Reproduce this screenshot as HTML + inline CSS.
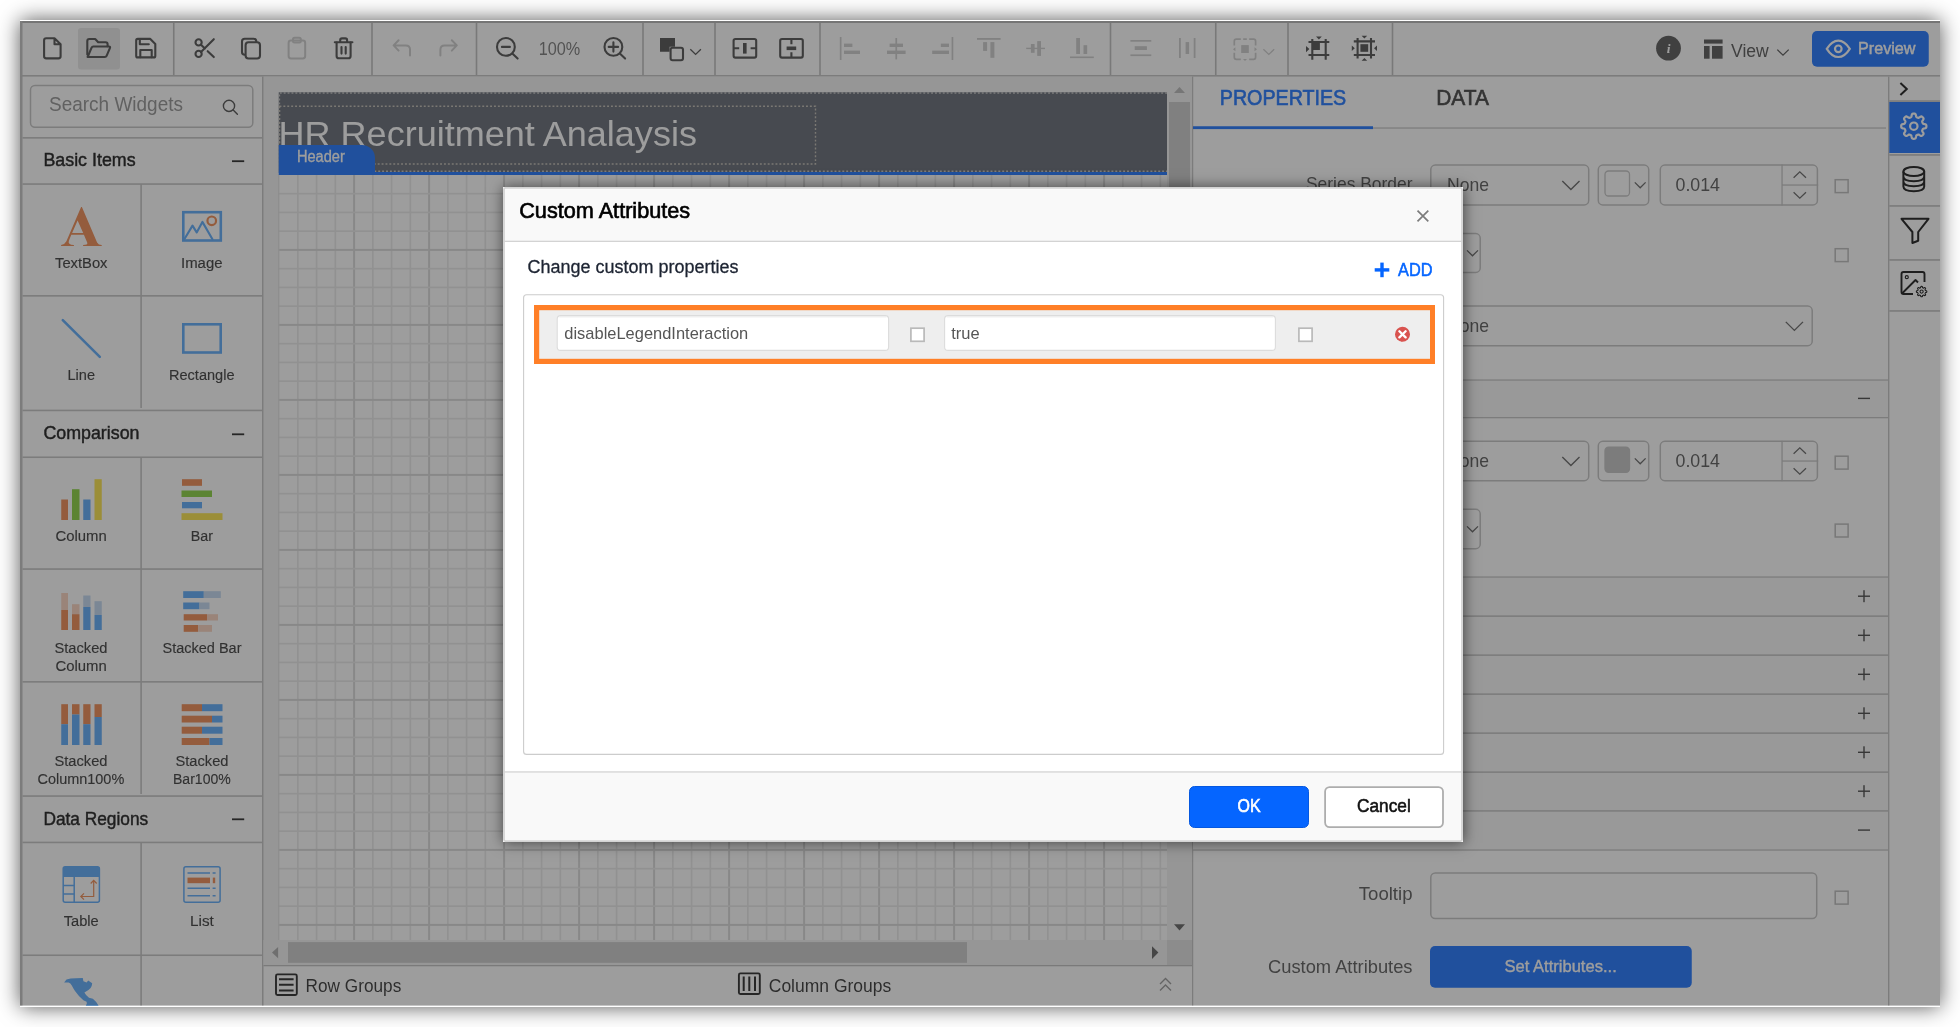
<!DOCTYPE html>
<html><head><meta charset="utf-8"><title>Custom Attributes</title>
<style>
html,body{margin:0;padding:0;background:#fff;}
body{width:1960px;height:1027px;position:relative;overflow:hidden;font-family:"Liberation Sans",sans-serif;}
#win{position:absolute;left:20px;top:20px;width:1920px;height:987px;background:#fff;box-shadow:0 0 20px rgba(0,0,0,.66);}
svg{position:absolute;left:0;top:0;will-change:transform;}
#dlgshadow{position:absolute;left:503.5px;top:187.5px;width:959px;height:654px;background:#fff;box-shadow:0 0 13px 1px rgba(0,0,0,.55);}
text{white-space:pre;}
</style></head><body>
<div id="win"></div>
<svg id="app" width="1960" height="1027" viewBox="0 0 1960 1027">
<rect x="20.00" y="21.00" width="1920.00" height="984.60" fill="#ffffff" />
<rect x="20.00" y="21.00" width="1920.00" height="2.00" fill="#aeaeae" />
<rect x="20.00" y="21.00" width="2.50" height="984.60" fill="#bcbcbc" />
<rect x="20.00" y="75.00" width="1920.00" height="1.6" fill="#bcbcbc"/>
<rect x="172.95" y="23.00" width="1.6" height="52.00" fill="#b6b6b6"/>
<rect x="371.20" y="23.00" width="1.6" height="52.00" fill="#b6b6b6"/>
<rect x="475.70" y="23.00" width="1.6" height="52.00" fill="#b6b6b6"/>
<rect x="642.20" y="23.00" width="1.6" height="52.00" fill="#b6b6b6"/>
<rect x="714.20" y="23.00" width="1.6" height="52.00" fill="#b6b6b6"/>
<rect x="819.20" y="23.00" width="1.6" height="52.00" fill="#b6b6b6"/>
<rect x="1109.70" y="23.00" width="1.6" height="52.00" fill="#b6b6b6"/>
<rect x="1214.95" y="23.00" width="1.6" height="52.00" fill="#b6b6b6"/>
<rect x="1287.20" y="23.00" width="1.6" height="52.00" fill="#b6b6b6"/>
<rect x="1391.70" y="23.00" width="1.6" height="52.00" fill="#b6b6b6"/>
<rect x="263.50" y="76.60" width="903.50" height="863.40" fill="#f0f0f0" />
<rect x="262.00" y="76.60" width="1.5" height="929.00" fill="#bcbcbc"/>
<rect x="278.75" y="174.50" width="888.25" height="765.50" fill="#ffffff" />
<rect x="297.00" y="174.5" width="1.7" height="765.5" fill="#e7e7e7"/>
<rect x="315.75" y="174.5" width="1.7" height="765.5" fill="#e7e7e7"/>
<rect x="334.50" y="174.5" width="1.7" height="765.5" fill="#e7e7e7"/>
<rect x="353.10" y="174.5" width="2.0" height="765.5" fill="#d5d5d5"/>
<rect x="372.00" y="174.5" width="1.7" height="765.5" fill="#e7e7e7"/>
<rect x="390.75" y="174.5" width="1.7" height="765.5" fill="#e7e7e7"/>
<rect x="409.50" y="174.5" width="1.7" height="765.5" fill="#e7e7e7"/>
<rect x="428.10" y="174.5" width="2.0" height="765.5" fill="#d5d5d5"/>
<rect x="447.00" y="174.5" width="1.7" height="765.5" fill="#e7e7e7"/>
<rect x="465.75" y="174.5" width="1.7" height="765.5" fill="#e7e7e7"/>
<rect x="484.50" y="174.5" width="1.7" height="765.5" fill="#e7e7e7"/>
<rect x="503.10" y="174.5" width="2.0" height="765.5" fill="#d5d5d5"/>
<rect x="522.00" y="174.5" width="1.7" height="765.5" fill="#e7e7e7"/>
<rect x="540.75" y="174.5" width="1.7" height="765.5" fill="#e7e7e7"/>
<rect x="559.50" y="174.5" width="1.7" height="765.5" fill="#e7e7e7"/>
<rect x="578.10" y="174.5" width="2.0" height="765.5" fill="#d5d5d5"/>
<rect x="597.00" y="174.5" width="1.7" height="765.5" fill="#e7e7e7"/>
<rect x="615.75" y="174.5" width="1.7" height="765.5" fill="#e7e7e7"/>
<rect x="634.50" y="174.5" width="1.7" height="765.5" fill="#e7e7e7"/>
<rect x="653.10" y="174.5" width="2.0" height="765.5" fill="#d5d5d5"/>
<rect x="672.00" y="174.5" width="1.7" height="765.5" fill="#e7e7e7"/>
<rect x="690.75" y="174.5" width="1.7" height="765.5" fill="#e7e7e7"/>
<rect x="709.50" y="174.5" width="1.7" height="765.5" fill="#e7e7e7"/>
<rect x="728.10" y="174.5" width="2.0" height="765.5" fill="#d5d5d5"/>
<rect x="747.00" y="174.5" width="1.7" height="765.5" fill="#e7e7e7"/>
<rect x="765.75" y="174.5" width="1.7" height="765.5" fill="#e7e7e7"/>
<rect x="784.50" y="174.5" width="1.7" height="765.5" fill="#e7e7e7"/>
<rect x="803.10" y="174.5" width="2.0" height="765.5" fill="#d5d5d5"/>
<rect x="822.00" y="174.5" width="1.7" height="765.5" fill="#e7e7e7"/>
<rect x="840.75" y="174.5" width="1.7" height="765.5" fill="#e7e7e7"/>
<rect x="859.50" y="174.5" width="1.7" height="765.5" fill="#e7e7e7"/>
<rect x="878.10" y="174.5" width="2.0" height="765.5" fill="#d5d5d5"/>
<rect x="897.00" y="174.5" width="1.7" height="765.5" fill="#e7e7e7"/>
<rect x="915.75" y="174.5" width="1.7" height="765.5" fill="#e7e7e7"/>
<rect x="934.50" y="174.5" width="1.7" height="765.5" fill="#e7e7e7"/>
<rect x="953.10" y="174.5" width="2.0" height="765.5" fill="#d5d5d5"/>
<rect x="972.00" y="174.5" width="1.7" height="765.5" fill="#e7e7e7"/>
<rect x="990.75" y="174.5" width="1.7" height="765.5" fill="#e7e7e7"/>
<rect x="1009.50" y="174.5" width="1.7" height="765.5" fill="#e7e7e7"/>
<rect x="1028.10" y="174.5" width="2.0" height="765.5" fill="#d5d5d5"/>
<rect x="1047.00" y="174.5" width="1.7" height="765.5" fill="#e7e7e7"/>
<rect x="1065.75" y="174.5" width="1.7" height="765.5" fill="#e7e7e7"/>
<rect x="1084.50" y="174.5" width="1.7" height="765.5" fill="#e7e7e7"/>
<rect x="1103.10" y="174.5" width="2.0" height="765.5" fill="#d5d5d5"/>
<rect x="1122.00" y="174.5" width="1.7" height="765.5" fill="#e7e7e7"/>
<rect x="1140.75" y="174.5" width="1.7" height="765.5" fill="#e7e7e7"/>
<rect x="1159.50" y="174.5" width="1.7" height="765.5" fill="#e7e7e7"/>
<rect x="278.75" y="192.80" width="888.25" height="1.7" fill="#e7e7e7"/>
<rect x="278.75" y="211.55" width="888.25" height="1.7" fill="#e7e7e7"/>
<rect x="278.75" y="230.30" width="888.25" height="1.7" fill="#e7e7e7"/>
<rect x="278.75" y="248.90" width="888.25" height="2.0" fill="#d5d5d5"/>
<rect x="278.75" y="267.80" width="888.25" height="1.7" fill="#e7e7e7"/>
<rect x="278.75" y="286.55" width="888.25" height="1.7" fill="#e7e7e7"/>
<rect x="278.75" y="305.30" width="888.25" height="1.7" fill="#e7e7e7"/>
<rect x="278.75" y="323.90" width="888.25" height="2.0" fill="#d5d5d5"/>
<rect x="278.75" y="342.80" width="888.25" height="1.7" fill="#e7e7e7"/>
<rect x="278.75" y="361.55" width="888.25" height="1.7" fill="#e7e7e7"/>
<rect x="278.75" y="380.30" width="888.25" height="1.7" fill="#e7e7e7"/>
<rect x="278.75" y="398.90" width="888.25" height="2.0" fill="#d5d5d5"/>
<rect x="278.75" y="417.80" width="888.25" height="1.7" fill="#e7e7e7"/>
<rect x="278.75" y="436.55" width="888.25" height="1.7" fill="#e7e7e7"/>
<rect x="278.75" y="455.30" width="888.25" height="1.7" fill="#e7e7e7"/>
<rect x="278.75" y="473.90" width="888.25" height="2.0" fill="#d5d5d5"/>
<rect x="278.75" y="492.80" width="888.25" height="1.7" fill="#e7e7e7"/>
<rect x="278.75" y="511.55" width="888.25" height="1.7" fill="#e7e7e7"/>
<rect x="278.75" y="530.30" width="888.25" height="1.7" fill="#e7e7e7"/>
<rect x="278.75" y="548.90" width="888.25" height="2.0" fill="#d5d5d5"/>
<rect x="278.75" y="567.80" width="888.25" height="1.7" fill="#e7e7e7"/>
<rect x="278.75" y="586.55" width="888.25" height="1.7" fill="#e7e7e7"/>
<rect x="278.75" y="605.30" width="888.25" height="1.7" fill="#e7e7e7"/>
<rect x="278.75" y="623.90" width="888.25" height="2.0" fill="#d5d5d5"/>
<rect x="278.75" y="642.80" width="888.25" height="1.7" fill="#e7e7e7"/>
<rect x="278.75" y="661.55" width="888.25" height="1.7" fill="#e7e7e7"/>
<rect x="278.75" y="680.30" width="888.25" height="1.7" fill="#e7e7e7"/>
<rect x="278.75" y="698.90" width="888.25" height="2.0" fill="#d5d5d5"/>
<rect x="278.75" y="717.80" width="888.25" height="1.7" fill="#e7e7e7"/>
<rect x="278.75" y="736.55" width="888.25" height="1.7" fill="#e7e7e7"/>
<rect x="278.75" y="755.30" width="888.25" height="1.7" fill="#e7e7e7"/>
<rect x="278.75" y="773.90" width="888.25" height="2.0" fill="#d5d5d5"/>
<rect x="278.75" y="792.80" width="888.25" height="1.7" fill="#e7e7e7"/>
<rect x="278.75" y="811.55" width="888.25" height="1.7" fill="#e7e7e7"/>
<rect x="278.75" y="830.30" width="888.25" height="1.7" fill="#e7e7e7"/>
<rect x="278.75" y="848.90" width="888.25" height="2.0" fill="#d5d5d5"/>
<rect x="278.75" y="867.80" width="888.25" height="1.7" fill="#e7e7e7"/>
<rect x="278.75" y="886.55" width="888.25" height="1.7" fill="#e7e7e7"/>
<rect x="278.75" y="905.30" width="888.25" height="1.7" fill="#e7e7e7"/>
<rect x="278.75" y="923.90" width="888.25" height="2.0" fill="#d5d5d5"/>
<rect x="278.15" y="174.50" width="1.2" height="765.50" fill="#dcdcdc"/>
<rect x="278.75" y="92.25" width="888.25" height="79.75" fill="#535965" />
<path d="M1167 92.95 H279.45 V171.3 H1167" fill="none" stroke="#bdbdbd" stroke-width="1.4" stroke-dasharray="1.9 2"/>
<rect x="278.75" y="172.00" width="888.25" height="3.00" fill="#0565ff" />
<rect x="279.5" y="106.3" width="536" height="57.7" fill="none" stroke="#b9b4aa" stroke-width="1.4" stroke-dasharray="1.9 2"/>
<text x="278.60" y="146.00" font-family="Liberation Sans" font-size="35.6" font-weight="normal" fill="#ffffff" textLength="418.30" lengthAdjust="spacingAndGlyphs">HR Recruitment Analaysis</text>
<path d="M278.75 145 H362 A13 13 0 0 1 375 158 V173 H278.75 Z" fill="#0565ff" />
<text x="296.90" y="162.00" font-family="Liberation Sans" font-size="15.6" font-weight="normal" fill="#ffffff" textLength="47.90" lengthAdjust="spacingAndGlyphs" stroke="#ffffff" stroke-width="0.3">Header</text>
<rect x="1167.00" y="76.60" width="25.00" height="863.40" fill="#f0f0f0" />
<rect x="1169.00" y="102.00" width="21.00" height="718.00" fill="#c4c4c4" />
<path d="M1174 93 L1179.5 87 L1185 93 Z" fill="#b0b0b0" />
<path d="M1174 924.2 L1185 924.2 L1179.5 930.4 Z" fill="#505050" />
<rect x="263.50" y="940.00" width="903.50" height="25.00" fill="#f0f0f0" />
<rect x="288.00" y="942.10" width="679.00" height="20.70" fill="#c4c4c4" />
<path d="M278.1 947 L272 952.6 L278.1 958.2 Z" fill="#a3a3a3" />
<path d="M1152 946.3 L1158.4 952.6 L1152 958.9 Z" fill="#505050" />
<rect x="1167.00" y="940.00" width="25.00" height="25.30" fill="#dcdcdc" />
<rect x="263.50" y="965.00" width="928.50" height="1.3" fill="#b8b8b8"/>
<g fill="none" stroke="#111" stroke-width="1.9"><rect x="276" y="974.4" width="20.8" height="20.6" rx="1.5"/><path d="M279 979.2h14.6M279 984.8h14.6M279 990.5h14.6" stroke-width="2"/></g>
<text x="305.60" y="992.40" font-family="Liberation Sans" font-size="18" font-weight="normal" fill="#1c1c1c" textLength="95.65" lengthAdjust="spacingAndGlyphs">Row Groups</text>
<g fill="none" stroke="#111" stroke-width="1.9"><rect x="738.9" y="973.4" width="20.9" height="20.6" rx="1.5"/><path d="M743.7 976.4v14.6M749.3 976.4v14.6M755 976.4v14.6" stroke-width="2"/></g>
<text x="768.75" y="992.20" font-family="Liberation Sans" font-size="18" font-weight="normal" fill="#1c1c1c" textLength="122.50" lengthAdjust="spacingAndGlyphs">Column Groups</text>
<path d="M1160 984 L1165.5 978.5 L1171 984 M1160 990.5 L1165.5 985 L1171 990.5" fill="none" stroke="#8c8c8c" stroke-width="1.4" />
<rect x="1192.00" y="76.60" width="1.25" height="929.00" fill="#bcbcbc"/>
<rect x="1193.00" y="127.40" width="693.00" height="1.25" fill="#bcbcbc"/>
<rect x="1193.00" y="126.25" width="180.00" height="2.85" fill="#0565ff" />
<text x="1219.75" y="105.40" font-family="Liberation Sans" font-size="22" font-weight="normal" fill="#0565ff" textLength="126.50" lengthAdjust="spacingAndGlyphs" stroke="#0565ff" stroke-width="0.65">PROPERTIES</text>
<text x="1436.25" y="105.40" font-family="Liberation Sans" font-size="22" font-weight="normal" fill="#2c2c2c" textLength="52.75" lengthAdjust="spacingAndGlyphs" stroke="#2c2c2c" stroke-width="0.65">DATA</text>
<rect x="1888.00" y="76.60" width="1.4" height="929.00" fill="#bcbcbc"/>
<rect x="1889.30" y="102.00" width="50.70" height="51.00" fill="#0565ff" />
<rect x="1889.30" y="100.30" width="50.70" height="1.5" fill="#b4b4b4"/>
<rect x="1889.30" y="154.20" width="50.70" height="1.5" fill="#b4b4b4"/>
<rect x="1889.30" y="205.20" width="50.70" height="1.5" fill="#b4b4b4"/>
<rect x="1889.30" y="259.20" width="50.70" height="1.5" fill="#b4b4b4"/>
<rect x="1889.30" y="310.20" width="50.70" height="1.5" fill="#b4b4b4"/>
<rect x="78.00" y="28.00" width="42.00" height="41.50" fill="#e4e4e4" rx="3" />
<g fill="none" stroke="#3d3d3d" stroke-width="2.1" stroke-linecap="round" stroke-linejoin="round" >
<path d="M46.2 38.2 H54.5 L60.6 44.3 V56.3 Q60.6 58.4 58.5 58.4 H46.2 Q44.1 58.4 44.1 56.3 V40.3 Q44.1 38.2 46.2 38.2 Z M54.5 38.4 V44.3 H60.4"/>
<path d="M87.3 54.5 V41 Q87.3 39 89.3 39 H95.2 L98.2 42.2 H105.6 Q107.6 42.2 107.6 44.2 V46.3"/>
<path d="M87.6 57 L91.6 47.6 Q92.1 46.5 93.3 46.5 H108.8 Q110.6 46.5 109.9 48.2 L106.6 55.9 Q106.1 57 104.9 57 Z"/>
<path d="M136.2 40.4 Q136.2 38.9 137.7 38.9 H150.3 L155.3 43.9 V55.9 Q155.3 57.4 153.8 57.4 H137.7 Q136.2 57.4 136.2 55.9 Z"/>
<path d="M139.8 39 V44.2 H148.8 M140.3 57.3 V50 H151.7 V57.3"/>
<circle cx="198.6" cy="42.4" r="3.1"/><circle cx="198.6" cy="53.9" r="3.1"/>
<path d="M201 44.7 L204.9 48.5 M207.7 51.2 L213.8 57.1 M201 51.9 L213.8 39.2"/>
<rect x="245.6" y="42.3" width="14.4" height="16.2" rx="2.9"/>
<path d="M256.3 42 V41.4 Q256.3 38.7 253.6 38.7 H244.7 Q242 38.7 242 41.4 V52 Q242 54.7 244.7 54.7 H245.4" stroke-linecap="butt"/>
<path d="M334.8 42.3 H352.4 M340.2 42 V40.2 Q340.2 38.4 342 38.4 H345.3 Q347.1 38.4 347.1 40.2 V42"/>
<path d="M336.6 42.5 V55.9 Q336.6 58.3 339 58.3 H348.2 Q350.6 58.3 350.6 55.9 V42.5 M341.5 47 V53.6 M345.7 47 V53.6"/>
<circle cx="505.9" cy="46.9" r="8.9"/><path d="M501.9 46.9 H509.9 M512.6 53.8 L517.6 58.6"/>
<circle cx="613.4" cy="46.9" r="8.9"/><path d="M608.7 46.9 H618.1 M613.4 42.2 V51.6 M620.1 53.8 L625.1 58.6"/>
<rect x="670.6" y="47.8" width="12.4" height="12.4" rx="2" fill="#fff"/>
<rect x="733.6" y="39" width="22.6" height="18.6" rx="1.8"/><path d="M733.6 48.3 H739.2 M750.6 48.3 H756" stroke-linecap="butt"/>
<rect x="780.2" y="39" width="22.6" height="18.6" rx="1.8"/><path d="M791.4 39.2 V44.3 M791.4 52.3 V57.4" stroke-linecap="butt"/>
</g>
<path d="M660 38 H675 V46.8 H669.6 V51.8 H660 Z" fill="#3d3d3d"/>
<rect x="743.00" y="43.00" width="3.60" height="10.60" fill="#3d3d3d" />
<rect x="786.60" y="46.50" width="9.60" height="3.60" fill="#3d3d3d" />
<path d="M690.3 49.2 L695.6 54.4 L700.9 49.2" fill="none" stroke="#3d3d3d" stroke-width="1.3" />
<g fill="none" stroke="#c6c6c6" stroke-width="2.0" stroke-linecap="round" stroke-linejoin="round" >
<rect x="288.6" y="40.6" width="16.6" height="17.8" rx="2.4"/><rect x="293" y="37.8" width="7.8" height="4.6" rx="1.5"/>
<path d="M398.6 40.2 L393.6 45.4 L398.6 50.6 M393.8 45.4 H405.8 Q410 45.4 410 49.6 V55.6"/>
<path d="M451.8 40.2 L456.8 45.4 L451.8 50.6 M456.6 45.4 H444.6 Q440.4 45.4 440.4 49.6 V55.6"/>
</g>
<text x="538.75" y="54.70" font-family="Liberation Sans" font-size="18" font-weight="normal" fill="#6a6a6a" textLength="41.55" lengthAdjust="spacingAndGlyphs">100%</text>
<rect x="839.80" y="37.00" width="1.70" height="23.00" fill="#c6c6c6" />
<rect x="844.00" y="43.60" width="8.40" height="3.40" fill="#c6c6c6" />
<rect x="844.00" y="50.60" width="16.00" height="3.40" fill="#c6c6c6" />
<rect x="895.40" y="38.00" width="1.70" height="21.40" fill="#c6c6c6" />
<rect x="889.60" y="43.60" width="13.40" height="3.40" fill="#c6c6c6" />
<rect x="887.00" y="50.60" width="18.60" height="3.40" fill="#c6c6c6" />
<rect x="951.60" y="37.00" width="1.70" height="23.00" fill="#c6c6c6" />
<rect x="940.80" y="43.60" width="8.20" height="3.40" fill="#c6c6c6" />
<rect x="932.20" y="50.60" width="16.80" height="3.40" fill="#c6c6c6" />
<rect x="977.00" y="38.00" width="23.60" height="1.80" fill="#c6c6c6" />
<rect x="983.10" y="42.10" width="4.00" height="8.80" fill="#c6c6c6" />
<rect x="990.40" y="42.10" width="4.00" height="15.70" fill="#c6c6c6" />
<rect x="1026.20" y="47.70" width="18.80" height="1.40" fill="#c6c6c6" />
<rect x="1030.90" y="44.00" width="3.70" height="8.80" fill="#c6c6c6" />
<rect x="1037.20" y="41.10" width="3.80" height="14.80" fill="#c6c6c6" />
<rect x="1070.00" y="56.50" width="23.80" height="1.60" fill="#c6c6c6" />
<rect x="1076.20" y="38.00" width="3.80" height="16.00" fill="#c6c6c6" />
<rect x="1083.50" y="45.20" width="3.70" height="8.80" fill="#c6c6c6" />
<rect x="1130.40" y="40.00" width="20.90" height="1.70" fill="#c6c6c6" />
<rect x="1130.40" y="54.40" width="20.90" height="1.70" fill="#c6c6c6" />
<rect x="1134.70" y="46.20" width="12.20" height="3.80" fill="#c6c6c6" />
<rect x="1179.00" y="38.00" width="1.80" height="20.00" fill="#c6c6c6" />
<rect x="1193.70" y="38.00" width="1.80" height="20.00" fill="#c6c6c6" />
<rect x="1185.60" y="42.10" width="3.50" height="11.90" fill="#c6c6c6" />
<g fill="none" stroke="#c6c6c6" stroke-width="1.7"><path d="M1234.3 45.6 V41.2 Q1234.3 39.2 1236.3 39.2 H1240.8 M1249.2 39.2 H1253.6 Q1255.6 39.2 1255.6 41.2 V45.6 M1234.3 52.8 V57.3 Q1234.3 59.3 1236.3 59.3 H1240.8 M1249.2 59.3 H1253.6 Q1255.6 59.3 1255.6 57.3 V52.8 M1243.2 39.2 H1246.8"/></g>
<path d="M1235.4 47.2 L1233 49.2 L1235.4 51.2 Z M1254.5 47.2 L1257 49.2 L1254.5 51.2 Z M1243 58.9 L1245 61.1 L1247 58.9 Z" fill="#c6c6c6" />
<rect x="1241.20" y="45.10" width="7.60" height="7.90" fill="#c6c6c6" />
<path d="M1263.4 49.2 L1268.8 54.4 L1274.2 49.2" fill="none" stroke="#c6c6c6" stroke-width="1.3" />
<rect x="30.50" y="85.50" width="222.30" height="41.80" fill="#fff" stroke="#bcbcbc" stroke-width="1.5" rx="4.5" />
<text x="49.00" y="110.80" font-family="Liberation Sans" font-size="19.3" font-weight="normal" fill="#868686" textLength="134.00" lengthAdjust="spacingAndGlyphs">Search Widgets</text>
<g fill="none" stroke="#3d3d3d" stroke-width="1.4" stroke-linecap="round"><circle cx="229" cy="105.9" r="5.6"/><path d="M233.2 110 L237.4 114.3"/></g>
<rect x="22.50" y="137.05" width="239.50" height="1.6" fill="#bcbcbc"/>
<rect x="22.50" y="183.25" width="239.50" height="1.6" fill="#bcbcbc"/>
<text x="43.40" y="166.00" font-family="Liberation Sans" font-size="18" font-weight="normal" fill="#000" textLength="92.20" lengthAdjust="spacingAndGlyphs" stroke="#000" stroke-width="0.45">Basic Items</text>
<rect x="232.00" y="160.30" width="12.20" height="1.80" fill="#111" />
<rect x="22.50" y="409.65" width="239.50" height="1.6" fill="#bcbcbc"/>
<rect x="22.50" y="456.45" width="239.50" height="1.6" fill="#bcbcbc"/>
<text x="43.40" y="439.40" font-family="Liberation Sans" font-size="18" font-weight="normal" fill="#000" textLength="96.10" lengthAdjust="spacingAndGlyphs" stroke="#000" stroke-width="0.45">Comparison</text>
<rect x="232.00" y="433.40" width="12.20" height="1.80" fill="#111" />
<rect x="22.50" y="795.25" width="239.50" height="1.6" fill="#bcbcbc"/>
<rect x="22.50" y="841.65" width="239.50" height="1.6" fill="#bcbcbc"/>
<text x="43.40" y="824.80" font-family="Liberation Sans" font-size="18" font-weight="normal" fill="#000" textLength="104.85" lengthAdjust="spacingAndGlyphs" stroke="#000" stroke-width="0.45">Data Regions</text>
<rect x="232.00" y="818.40" width="12.20" height="1.80" fill="#111" />
<rect x="140.30" y="184.00" width="1.6" height="224.00" fill="#bcbcbc"/>
<rect x="140.30" y="457.20" width="1.6" height="336.80" fill="#bcbcbc"/>
<rect x="140.30" y="842.40" width="1.6" height="163.20" fill="#bcbcbc"/>
<rect x="22.50" y="295.05" width="239.50" height="1.6" fill="#bcbcbc"/>
<rect x="22.50" y="568.25" width="239.50" height="1.6" fill="#bcbcbc"/>
<rect x="22.50" y="681.05" width="239.50" height="1.6" fill="#bcbcbc"/>
<rect x="22.50" y="954.45" width="239.50" height="1.6" fill="#bcbcbc"/>
<path fill-rule="evenodd" d="M81.1 207 L81.9 207 L97.1 242.5 Q98.4 245 101.7 245.1 L101.7 245.9 L83.1 245.9 L83.1 245.1 Q88 245 87.3 242.8 L83.9 234.7 L71.3 234.7 L68.9 240.8 Q67.4 244.8 73.9 245.1 L73.9 245.9 L61.1 245.9 L61.1 245.1 Q64.6 244.6 66.4 241.2 Z M77.6 220.6 L83.2 233.1 L72.1 233.1 Z" fill="#ec7c3e"/>
<text x="55.00" y="268.00" font-family="Liberation Sans" font-size="15.5" font-weight="normal" fill="#262626" textLength="52.50" lengthAdjust="spacingAndGlyphs" stroke="#262626" stroke-width="0.15">TextBox</text>
<g fill="none" stroke="#4aa0f8" stroke-width="2.6"><rect x="183.3" y="212.2" width="37.5" height="28.3"/><path d="M184 239.8 L192.5 225.6 L196.7 232.4 L202.4 221.9 L212.9 240" stroke-width="2.1" stroke-linejoin="round"/></g>
<circle cx="211.75" cy="220.8" r="4.3" fill="none" stroke="#ec7c3e" stroke-width="2.2"/>
<text x="181.00" y="268.00" font-family="Liberation Sans" font-size="15.5" font-weight="normal" fill="#262626" textLength="41.50" lengthAdjust="spacingAndGlyphs" stroke="#262626" stroke-width="0.15">Image</text>
<path d="M62.8 320.2 L99.8 356.8" stroke="#4aa0f8" stroke-width="2.6" stroke-linecap="round"/>
<text x="67.50" y="380.00" font-family="Liberation Sans" font-size="15.5" font-weight="normal" fill="#262626" textLength="27.50" lengthAdjust="spacingAndGlyphs" stroke="#262626" stroke-width="0.15">Line</text>
<rect x="183.3" y="324.3" width="37.4" height="28.2" fill="none" stroke="#4aa0f8" stroke-width="2.6"/>
<text x="169.00" y="380.00" font-family="Liberation Sans" font-size="15.5" font-weight="normal" fill="#262626" textLength="65.50" lengthAdjust="spacingAndGlyphs" stroke="#262626" stroke-width="0.15">Rectangle</text>
<rect x="61.25" y="499.50" width="6.75" height="20.50" fill="#ec7c3e" />
<rect x="72.00" y="489.20" width="7.50" height="30.80" fill="#7ccd2a" />
<rect x="83.25" y="499.50" width="7.25" height="20.50" fill="#4aa0f8" />
<rect x="94.50" y="479.20" width="7.25" height="40.80" fill="#fbe034" />
<text x="55.50" y="541.20" font-family="Liberation Sans" font-size="15.5" font-weight="normal" fill="#262626" textLength="51.25" lengthAdjust="spacingAndGlyphs" stroke="#262626" stroke-width="0.15">Column</text>
<rect x="182.00" y="479.20" width="20.00" height="6.60" fill="#ec7c3e" />
<rect x="181.50" y="490.50" width="30.50" height="6.50" fill="#7ccd2a" />
<rect x="182.00" y="502.00" width="20.00" height="6.30" fill="#4aa0f8" />
<rect x="181.50" y="513.20" width="41.00" height="6.80" fill="#fbe034" />
<text x="190.75" y="541.20" font-family="Liberation Sans" font-size="15.5" font-weight="normal" fill="#262626" textLength="22.25" lengthAdjust="spacingAndGlyphs" stroke="#262626" stroke-width="0.15">Bar</text>
<rect x="61.25" y="593.00" width="6.75" height="17.00" fill="#f8ccb6" />
<rect x="61.25" y="610.00" width="6.75" height="20.00" fill="#ec7c3e" />
<rect x="72.00" y="604.20" width="7.50" height="10.00" fill="#f8ccb6" />
<rect x="72.00" y="614.20" width="7.50" height="15.80" fill="#ec7c3e" />
<rect x="83.25" y="595.50" width="7.25" height="11.50" fill="#bad2ee" />
<rect x="83.25" y="607.00" width="7.25" height="23.00" fill="#4aa0f8" />
<rect x="94.50" y="601.20" width="7.25" height="13.80" fill="#bad2ee" />
<rect x="94.50" y="615.00" width="7.25" height="15.00" fill="#4aa0f8" />
<text x="54.50" y="652.50" font-family="Liberation Sans" font-size="15.5" font-weight="normal" fill="#262626" textLength="53.00" lengthAdjust="spacingAndGlyphs" stroke="#262626" stroke-width="0.15">Stacked</text>
<text x="55.50" y="670.50" font-family="Liberation Sans" font-size="15.5" font-weight="normal" fill="#262626" textLength="51.25" lengthAdjust="spacingAndGlyphs" stroke="#262626" stroke-width="0.15">Column</text>
<rect x="183.20" y="591.20" width="20.60" height="6.80" fill="#4aa0f8" />
<rect x="203.80" y="591.20" width="17.00" height="6.80" fill="#bad2ee" />
<rect x="183.20" y="602.50" width="16.30" height="6.70" fill="#4aa0f8" />
<rect x="199.50" y="602.50" width="10.00" height="6.70" fill="#bad2ee" />
<rect x="183.70" y="614.20" width="23.30" height="6.30" fill="#ec7c3e" />
<rect x="207.00" y="614.20" width="11.00" height="6.30" fill="#f8ccb6" />
<rect x="183.70" y="625.00" width="14.50" height="6.80" fill="#ec7c3e" />
<rect x="198.20" y="625.00" width="13.80" height="6.80" fill="#f8ccb6" />
<text x="162.50" y="652.50" font-family="Liberation Sans" font-size="15.5" font-weight="normal" fill="#262626" textLength="79.00" lengthAdjust="spacingAndGlyphs" stroke="#262626" stroke-width="0.15">Stacked Bar</text>
<rect x="61.25" y="704.20" width="6.75" height="20.00" fill="#ec7c3e" />
<rect x="61.25" y="724.20" width="6.75" height="20.80" fill="#4aa0f8" />
<rect x="72.00" y="704.20" width="7.50" height="10.30" fill="#ec7c3e" />
<rect x="72.00" y="714.50" width="7.50" height="30.50" fill="#4aa0f8" />
<rect x="83.25" y="704.20" width="7.25" height="20.00" fill="#ec7c3e" />
<rect x="83.25" y="724.20" width="7.25" height="20.80" fill="#4aa0f8" />
<rect x="94.50" y="704.20" width="7.25" height="12.80" fill="#ec7c3e" />
<rect x="94.50" y="717.00" width="7.25" height="28.00" fill="#4aa0f8" />
<text x="54.50" y="765.50" font-family="Liberation Sans" font-size="15.5" font-weight="normal" fill="#262626" textLength="53.00" lengthAdjust="spacingAndGlyphs" stroke="#262626" stroke-width="0.15">Stacked</text>
<text x="37.50" y="783.70" font-family="Liberation Sans" font-size="15.5" font-weight="normal" fill="#262626" textLength="86.75" lengthAdjust="spacingAndGlyphs" stroke="#262626" stroke-width="0.15">Column100%</text>
<rect x="181.70" y="704.20" width="20.30" height="7.00" fill="#ec7c3e" />
<rect x="202.00" y="704.20" width="20.50" height="7.00" fill="#4aa0f8" />
<rect x="181.70" y="715.70" width="30.30" height="6.80" fill="#ec7c3e" />
<rect x="212.00" y="715.70" width="10.50" height="6.80" fill="#4aa0f8" />
<rect x="181.70" y="726.70" width="20.30" height="7.00" fill="#ec7c3e" />
<rect x="202.00" y="726.70" width="20.50" height="7.00" fill="#4aa0f8" />
<rect x="181.70" y="738.00" width="27.80" height="7.00" fill="#ec7c3e" />
<rect x="209.50" y="738.00" width="13.00" height="7.00" fill="#4aa0f8" />
<text x="175.50" y="765.50" font-family="Liberation Sans" font-size="15.5" font-weight="normal" fill="#262626" textLength="53.00" lengthAdjust="spacingAndGlyphs" stroke="#262626" stroke-width="0.15">Stacked</text>
<text x="173.00" y="783.70" font-family="Liberation Sans" font-size="15.5" font-weight="normal" fill="#262626" textLength="57.75" lengthAdjust="spacingAndGlyphs" stroke="#262626" stroke-width="0.15">Bar100%</text>
<g><rect x="63.2" y="866.7" width="36.2" height="35.6" rx="2" fill="none" stroke="#4aa0f8" stroke-width="1.5"/><path d="M63.2 868.2 Q63.2 866.7 64.7 866.7 H97.9 Q99.4 866.7 99.4 868.2 V877 H63.2 Z" fill="#4aa0f8"/><path d="M74.2 877 V902.3 M63.2 885.5 H74.2 M63.2 894 H74.2" stroke="#4aa0f8" stroke-width="1.5" fill="none"/><path d="M93.7 880.5 V896.5 H81 M90.7 883.5 L93.7 880.3 L96.7 883.5 M84 893.3 L80.8 896.5 L84 899.7" stroke="#ec7c3e" stroke-width="1.2" fill="none"/></g>
<text x="63.75" y="926.00" font-family="Liberation Sans" font-size="15.5" font-weight="normal" fill="#262626" textLength="35.00" lengthAdjust="spacingAndGlyphs" stroke="#262626" stroke-width="0.15">Table</text>
<g><rect x="183.9" y="866.7" width="36.2" height="35.6" rx="2" fill="none" stroke="#4aa0f8" stroke-width="1.5"/><path d="M187.5 873 H210 M212.6 873 H215.6 M187.5 888.2 H210 M212.6 888.2 H215.6 M187.5 895.8 H210 M212.6 895.8 H215.6" stroke="#4aa0f8" stroke-width="1.4" fill="none"/><rect x="187.5" y="877.6" width="22.5" height="5.6" fill="#ec7c3e"/><rect x="212.8" y="877.6" width="2.4" height="5.6" fill="#ec7c3e"/></g>
<text x="190.00" y="926.00" font-family="Liberation Sans" font-size="15.5" font-weight="normal" fill="#262626" textLength="23.75" lengthAdjust="spacingAndGlyphs" stroke="#262626" stroke-width="0.15">List</text>
<path d="M64.1 982.6 L66.5 979.4 Q70 978.2 76 978.2 L82.8 978 L83.4 981.2 L86.6 982.6 L88.2 980.4 L92.2 983.2 Q92 986 90.6 987.9 Q88.5 990.5 84.4 992.4 Q86 995.5 89 997.8 L92.9 998.7 Q96.5 1001.5 98.6 1005.8 L85.8 1005.8 Q87.5 1003.5 86.6 1001.8 L83.4 1000.2 Q78 995.5 75 991 Q72.8 987.5 71.8 985.4 Q70.5 983.4 68.6 982.6 Z" fill="#4aa0f8"/>
<g stroke="#3d3d3d" stroke-width="2.1" fill="none"><path d="M1312.3 39 V59.8 M1325.7 39 V59.8 M1308.5 42 H1329.3 M1308.5 55 H1329.3"/></g>
<rect x="1312.30" y="42.00" width="7.60" height="8.00" fill="#3d3d3d" />
<path d="M1316 36.6 H1321.8 L1318.9 39.6 Z M1306 46 L1309.4 49.1 L1306 52.2 Z" fill="#3d3d3d" />
<g stroke="#3d3d3d" stroke-width="2.1" fill="none"><path d="M1357.6 38 V58.4 M1371 38 V58.4 M1353.8 41.4 H1375 M1353.8 55 H1375"/></g>
<rect x="1360.40" y="44.20" width="7.80" height="7.60" fill="#3d3d3d" />
<path d="M1361.6 35.7 H1367.2 L1364.4 38.6 Z M1361.6 60.8 H1367.2 L1364.4 57.9 Z M1351.8 45.4 L1354.8 48.2 L1351.8 51 Z M1377 45.4 L1374 48.2 L1377 51 Z" fill="#3d3d3d" />
<circle cx="1668.5" cy="48.2" r="12.4" fill="#444"/>
<text x="1668.7" y="53" font-family="Liberation Serif" font-style="italic" font-weight="bold" font-size="13.5" fill="#fff" text-anchor="middle">i</text>
<rect x="1704.00" y="39.50" width="18.60" height="4.10" fill="#444" />
<rect x="1704.00" y="46.00" width="5.60" height="12.70" fill="#444" />
<rect x="1712.00" y="46.00" width="10.60" height="12.70" fill="#444" />
<text x="1731.00" y="57.00" font-family="Liberation Sans" font-size="18.3" font-weight="normal" fill="#444" textLength="37.75" lengthAdjust="spacingAndGlyphs">View</text>
<path d="M1777.3 49.6 L1783 55.2 L1788.7 49.6" fill="none" stroke="#444" stroke-width="1.3" />
<rect x="1812.00" y="31.00" width="116.75" height="35.75" fill="#0565ff" rx="5" />
<g fill="none" stroke="#fff" stroke-width="2.2"><path d="M1826.8 48.8 Q1832 40.6 1838.3 40.6 Q1844.6 40.6 1849.8 48.8 Q1844.6 57 1838.3 57 Q1832 57 1826.8 48.8 Z"/><circle cx="1838.3" cy="48.8" r="3.3"/></g>
<text x="1858.00" y="53.80" font-family="Liberation Sans" font-size="17" font-weight="normal" fill="#fff" textLength="57.50" lengthAdjust="spacingAndGlyphs" stroke="#fff" stroke-width="0.45">Preview</text>
<text x="1306.00" y="190.40" font-family="Liberation Sans" font-size="18.2" font-weight="normal" fill="#484848" textLength="106.50" lengthAdjust="spacingAndGlyphs">Series Border</text>
<rect x="1430.80" y="165.10" width="157.90" height="39.80" fill="#fff" stroke="#bcbcbc" stroke-width="1.5" rx="4.5" />
<path d="M1562.3 181.0 L1570.9 189.5 L1579.5 181.0" fill="none" stroke="#555" stroke-width="1.4" />
<text x="1447.00" y="191.00" font-family="Liberation Sans" font-size="18.2" font-weight="normal" fill="#484848" textLength="42.00" lengthAdjust="spacingAndGlyphs">None</text>
<rect x="1598.30" y="165.10" width="50.40" height="39.80" fill="#fff" stroke="#bcbcbc" stroke-width="1.5" rx="4.5" />
<rect x="1605.00" y="171.00" width="24.50" height="25.00" fill="#fff" stroke="#bcbcbc" stroke-width="1.3" rx="3.5" />
<path d="M1634.8 182.4 L1640.2 187.8 L1645.6 182.4" fill="none" stroke="#555" stroke-width="1.3" />
<rect x="1660.30" y="165.10" width="157.10" height="39.80" fill="#fff" stroke="#bcbcbc" stroke-width="1.5" rx="4.5" />
<rect x="1781.40" y="164.50" width="1.3" height="41.00" fill="#bcbcbc"/>
<rect x="1782.00" y="184.40" width="36.20" height="1.3" fill="#bcbcbc"/>
<text x="1675.50" y="191.30" font-family="Liberation Sans" font-size="18.2" font-weight="normal" fill="#484848" textLength="44.50" lengthAdjust="spacingAndGlyphs">0.014</text>
<path d="M1793.6 177.8 L1799.8 171.8 L1806 177.8 M1793.6 192.2 L1799.8 198.2 L1806 192.2" fill="none" stroke="#555" stroke-width="1.3" />
<rect x="1835.20" y="179.70" width="12.90" height="12.90" fill="#fff" stroke="#b4b4b4" stroke-width="1.5" />
<rect x="1430.80" y="233.60" width="49.40" height="38.80" fill="#fff" stroke="#bcbcbc" stroke-width="1.5" rx="4.5" />
<path d="M1467 250.4 L1472.5 255.8 L1478 250.4" fill="none" stroke="#555" stroke-width="1.3" />
<rect x="1835.20" y="248.70" width="12.90" height="12.90" fill="#fff" stroke="#b4b4b4" stroke-width="1.5" />
<rect x="1430.80" y="306.10" width="381.40" height="39.55" fill="#fff" stroke="#bcbcbc" stroke-width="1.5" rx="4.5" />
<path d="M1785.8 321.875 L1794.4 330.375 L1803 321.875" fill="none" stroke="#555" stroke-width="1.4" />
<text x="1447.00" y="331.88" font-family="Liberation Sans" font-size="18.2" font-weight="normal" fill="#484848" textLength="42.00" lengthAdjust="spacingAndGlyphs">None</text>
<rect x="1193.00" y="380.00" width="695.00" height="37.60" fill="#f7f7f7" />
<rect x="1193.00" y="379.40" width="695.00" height="1.3" fill="#bcbcbc"/>
<rect x="1193.00" y="417.00" width="695.00" height="1.3" fill="#bcbcbc"/>
<rect x="1858.00" y="397.70" width="12.00" height="1.40" fill="#333" />
<rect x="1430.80" y="441.35" width="157.90" height="39.30" fill="#fff" stroke="#bcbcbc" stroke-width="1.5" rx="4.5" />
<path d="M1562.3 457.0 L1570.9 465.5 L1579.5 457.0" fill="none" stroke="#555" stroke-width="1.4" />
<text x="1447.00" y="467.00" font-family="Liberation Sans" font-size="18.2" font-weight="normal" fill="#484848" textLength="42.00" lengthAdjust="spacingAndGlyphs">None</text>
<rect x="1598.30" y="441.35" width="50.40" height="39.30" fill="#fff" stroke="#bcbcbc" stroke-width="1.5" rx="4.5" />
<rect x="1605.00" y="447.25" width="24.50" height="25.00" fill="#bcbcbc" stroke="#bcbcbc" stroke-width="1.3" rx="3.5" />
<path d="M1634.8 458.4 L1640.2 463.8 L1645.6 458.4" fill="none" stroke="#555" stroke-width="1.3" />
<rect x="1660.30" y="441.35" width="157.10" height="39.30" fill="#fff" stroke="#bcbcbc" stroke-width="1.5" rx="4.5" />
<rect x="1781.40" y="440.75" width="1.3" height="40.50" fill="#bcbcbc"/>
<rect x="1782.00" y="460.40" width="36.20" height="1.3" fill="#bcbcbc"/>
<text x="1675.50" y="467.30" font-family="Liberation Sans" font-size="18.2" font-weight="normal" fill="#484848" textLength="44.50" lengthAdjust="spacingAndGlyphs">0.014</text>
<path d="M1793.6 453.8 L1799.8 447.8 L1806 453.8 M1793.6 468.2 L1799.8 474.2 L1806 468.2" fill="none" stroke="#555" stroke-width="1.3" />
<rect x="1835.20" y="456.20" width="12.90" height="12.90" fill="#fff" stroke="#b4b4b4" stroke-width="1.5" />
<rect x="1430.80" y="509.35" width="49.40" height="39.30" fill="#fff" stroke="#bcbcbc" stroke-width="1.5" rx="4.5" />
<path d="M1467 526.4 L1472.5 531.8 L1478 526.4" fill="none" stroke="#555" stroke-width="1.3" />
<rect x="1835.20" y="524.10" width="12.90" height="12.90" fill="#fff" stroke="#b4b4b4" stroke-width="1.5" />
<rect x="1193.00" y="577.00" width="695.00" height="39.20" fill="#f7f7f7" />
<rect x="1193.00" y="576.40" width="695.00" height="1.3" fill="#bcbcbc"/>
<rect x="1193.00" y="615.60" width="695.00" height="1.3" fill="#bcbcbc"/>
<rect x="1858.00" y="595.50" width="12.00" height="1.40" fill="#333" />
<rect x="1863.30" y="590.20" width="1.40" height="12.00" fill="#333" />
<rect x="1193.00" y="616.20" width="695.00" height="39.00" fill="#f7f7f7" />
<rect x="1193.00" y="615.60" width="695.00" height="1.3" fill="#bcbcbc"/>
<rect x="1193.00" y="654.60" width="695.00" height="1.3" fill="#bcbcbc"/>
<rect x="1858.00" y="634.60" width="12.00" height="1.40" fill="#333" />
<rect x="1863.30" y="629.30" width="1.40" height="12.00" fill="#333" />
<rect x="1193.00" y="655.20" width="695.00" height="39.00" fill="#f7f7f7" />
<rect x="1193.00" y="654.60" width="695.00" height="1.3" fill="#bcbcbc"/>
<rect x="1193.00" y="693.60" width="695.00" height="1.3" fill="#bcbcbc"/>
<rect x="1858.00" y="673.60" width="12.00" height="1.40" fill="#333" />
<rect x="1863.30" y="668.30" width="1.40" height="12.00" fill="#333" />
<rect x="1193.00" y="694.20" width="695.00" height="39.00" fill="#f7f7f7" />
<rect x="1193.00" y="693.60" width="695.00" height="1.3" fill="#bcbcbc"/>
<rect x="1193.00" y="732.60" width="695.00" height="1.3" fill="#bcbcbc"/>
<rect x="1858.00" y="712.60" width="12.00" height="1.40" fill="#333" />
<rect x="1863.30" y="707.30" width="1.40" height="12.00" fill="#333" />
<rect x="1193.00" y="733.20" width="695.00" height="39.00" fill="#f7f7f7" />
<rect x="1193.00" y="732.60" width="695.00" height="1.3" fill="#bcbcbc"/>
<rect x="1193.00" y="771.60" width="695.00" height="1.3" fill="#bcbcbc"/>
<rect x="1858.00" y="751.60" width="12.00" height="1.40" fill="#333" />
<rect x="1863.30" y="746.30" width="1.40" height="12.00" fill="#333" />
<rect x="1193.00" y="772.20" width="695.00" height="38.80" fill="#f7f7f7" />
<rect x="1193.00" y="771.60" width="695.00" height="1.3" fill="#bcbcbc"/>
<rect x="1193.00" y="810.40" width="695.00" height="1.3" fill="#bcbcbc"/>
<rect x="1858.00" y="790.50" width="12.00" height="1.40" fill="#333" />
<rect x="1863.30" y="785.20" width="1.40" height="12.00" fill="#333" />
<rect x="1193.00" y="811.00" width="695.00" height="39.00" fill="#f7f7f7" />
<rect x="1193.00" y="810.40" width="695.00" height="1.3" fill="#bcbcbc"/>
<rect x="1193.00" y="849.40" width="695.00" height="1.3" fill="#bcbcbc"/>
<rect x="1858.00" y="829.40" width="12.00" height="1.40" fill="#333" />
<text x="1358.75" y="899.80" font-family="Liberation Sans" font-size="18.2" font-weight="normal" fill="#484848" textLength="53.75" lengthAdjust="spacingAndGlyphs">Tooltip</text>
<rect x="1430.80" y="872.90" width="385.90" height="45.70" fill="#fff" stroke="#bcbcbc" stroke-width="1.5" rx="4.5" />
<rect x="1835.20" y="891.20" width="12.90" height="12.90" fill="#fff" stroke="#b4b4b4" stroke-width="1.5" />
<text x="1268.00" y="973.00" font-family="Liberation Sans" font-size="18.2" font-weight="normal" fill="#484848" textLength="144.50" lengthAdjust="spacingAndGlyphs">Custom Attributes</text>
<rect x="1430.00" y="946.00" width="261.75" height="41.75" fill="#0565ff" rx="5" />
<text x="1504.50" y="972.00" font-family="Liberation Sans" font-size="16.8" font-weight="normal" fill="#fff" textLength="112.25" lengthAdjust="spacingAndGlyphs" stroke="#fff" stroke-width="0.35">Set Attributes...</text>
<path d="M1900.4 83 L1906.8 89 L1900.4 95" fill="none" stroke="#000" stroke-width="2" />
<path d="M1913.80 113.60 L1914.21 113.61 L1914.62 113.66 L1915.03 113.76 L1915.41 113.99 L1915.73 114.51 L1915.95 115.41 L1916.11 116.31 L1916.31 116.84 L1916.56 117.11 L1916.83 117.27 L1917.11 117.40 L1917.40 117.52 L1917.68 117.63 L1917.97 117.74 L1918.28 117.82 L1918.64 117.81 L1919.16 117.58 L1919.91 117.05 L1920.70 116.57 L1921.30 116.43 L1921.73 116.54 L1922.09 116.75 L1922.41 117.01 L1922.71 117.29 L1922.99 117.59 L1923.25 117.91 L1923.46 118.27 L1923.57 118.70 L1923.43 119.30 L1922.95 120.09 L1922.42 120.84 L1922.19 121.36 L1922.18 121.72 L1922.26 122.03 L1922.37 122.32 L1922.48 122.60 L1922.60 122.89 L1922.73 123.17 L1922.89 123.44 L1923.16 123.69 L1923.69 123.89 L1924.59 124.05 L1925.49 124.27 L1926.01 124.59 L1926.24 124.97 L1926.34 125.38 L1926.39 125.79 L1926.40 126.20 L1926.39 126.61 L1926.34 127.02 L1926.24 127.43 L1926.01 127.81 L1925.49 128.13 L1924.59 128.35 L1923.69 128.51 L1923.16 128.71 L1922.89 128.96 L1922.73 129.23 L1922.60 129.51 L1922.48 129.80 L1922.37 130.08 L1922.26 130.37 L1922.18 130.68 L1922.19 131.04 L1922.42 131.56 L1922.95 132.31 L1923.43 133.10 L1923.57 133.70 L1923.46 134.13 L1923.25 134.49 L1922.99 134.81 L1922.71 135.11 L1922.41 135.39 L1922.09 135.65 L1921.73 135.86 L1921.30 135.97 L1920.70 135.83 L1919.91 135.35 L1919.16 134.82 L1918.64 134.59 L1918.28 134.58 L1917.97 134.66 L1917.68 134.77 L1917.40 134.88 L1917.11 135.00 L1916.83 135.13 L1916.56 135.29 L1916.31 135.56 L1916.11 136.09 L1915.95 136.99 L1915.73 137.89 L1915.41 138.41 L1915.03 138.64 L1914.62 138.74 L1914.21 138.79 L1913.80 138.80 L1913.39 138.79 L1912.98 138.74 L1912.57 138.64 L1912.19 138.41 L1911.87 137.89 L1911.65 136.99 L1911.49 136.09 L1911.29 135.56 L1911.04 135.29 L1910.77 135.13 L1910.49 135.00 L1910.20 134.88 L1909.92 134.77 L1909.63 134.66 L1909.32 134.58 L1908.96 134.59 L1908.44 134.82 L1907.69 135.35 L1906.90 135.83 L1906.30 135.97 L1905.87 135.86 L1905.51 135.65 L1905.19 135.39 L1904.89 135.11 L1904.61 134.81 L1904.35 134.49 L1904.14 134.13 L1904.03 133.70 L1904.17 133.10 L1904.65 132.31 L1905.18 131.56 L1905.41 131.04 L1905.42 130.68 L1905.34 130.37 L1905.23 130.08 L1905.12 129.80 L1905.00 129.51 L1904.87 129.23 L1904.71 128.96 L1904.44 128.71 L1903.91 128.51 L1903.01 128.35 L1902.11 128.13 L1901.59 127.81 L1901.36 127.43 L1901.26 127.02 L1901.21 126.61 L1901.20 126.20 L1901.21 125.79 L1901.26 125.38 L1901.36 124.97 L1901.59 124.59 L1902.11 124.27 L1903.01 124.05 L1903.91 123.89 L1904.44 123.69 L1904.71 123.44 L1904.87 123.17 L1905.00 122.89 L1905.12 122.60 L1905.23 122.32 L1905.34 122.03 L1905.42 121.72 L1905.41 121.36 L1905.18 120.84 L1904.65 120.09 L1904.17 119.30 L1904.03 118.70 L1904.14 118.27 L1904.35 117.91 L1904.61 117.59 L1904.89 117.29 L1905.19 117.01 L1905.51 116.75 L1905.87 116.54 L1906.30 116.43 L1906.90 116.57 L1907.69 117.05 L1908.44 117.58 L1908.96 117.81 L1909.32 117.82 L1909.63 117.74 L1909.92 117.63 L1910.20 117.52 L1910.49 117.40 L1910.77 117.27 L1911.04 117.11 L1911.29 116.84 L1911.49 116.31 L1911.65 115.41 L1911.87 114.51 L1912.19 113.99 L1912.57 113.76 L1912.98 113.66 L1913.39 113.61 Z" fill="none" stroke="#fff" stroke-width="2.2" stroke-linejoin="round"/>
<circle cx="1913.8" cy="126.2" r="3.7" fill="none" stroke="#fff" stroke-width="2.2"/>
<g fill="none" stroke="#000" stroke-width="2"><ellipse cx="1913.8" cy="171.5" rx="10.4" ry="4.6"/><path d="M1903.4 171.5 V186.5 Q1903.4 191.2 1913.8 191.2 Q1924.2 191.2 1924.2 186.5 V171.5 M1903.4 176.6 Q1903.4 181.2 1913.8 181.2 Q1924.2 181.2 1924.2 176.6 M1903.4 181.6 Q1903.4 186.2 1913.8 186.2 Q1924.2 186.2 1924.2 181.6"/></g>
<path d="M1901.5 218.8 H1928.5 L1918.2 232 V240.8 L1912.4 243 V232 Z" fill="none" stroke="#000" stroke-width="2" stroke-linejoin="round"/>
<g fill="none" stroke="#000" stroke-width="1.9" stroke-linejoin="round"><path d="M1924.5 282 V274 Q1924.5 272 1922.5 272 H1903.5 Q1901.5 272 1901.5 274 V292 Q1901.5 294 1903.5 294 H1913"/><path d="M1902 293.5 L1915.5 280 L1918 282.5" /><circle cx="1906.8" cy="277.2" r="1.5" stroke-width="1.2"/></g>
<path d="M1921.60 286.40 L1921.77 286.41 L1921.94 286.42 L1922.11 286.47 L1922.26 286.56 L1922.40 286.77 L1922.49 287.14 L1922.56 287.50 L1922.64 287.72 L1922.74 287.83 L1922.86 287.89 L1922.97 287.95 L1923.09 288.00 L1923.21 288.05 L1923.33 288.09 L1923.46 288.12 L1923.61 288.12 L1923.82 288.03 L1924.13 287.82 L1924.45 287.62 L1924.69 287.57 L1924.87 287.61 L1925.02 287.70 L1925.15 287.81 L1925.28 287.92 L1925.39 288.05 L1925.50 288.18 L1925.59 288.33 L1925.63 288.51 L1925.58 288.75 L1925.38 289.07 L1925.17 289.38 L1925.08 289.59 L1925.08 289.74 L1925.11 289.87 L1925.15 289.99 L1925.20 290.11 L1925.25 290.23 L1925.31 290.34 L1925.37 290.46 L1925.48 290.56 L1925.70 290.64 L1926.06 290.71 L1926.43 290.80 L1926.64 290.94 L1926.73 291.09 L1926.78 291.26 L1926.79 291.43 L1926.80 291.60 L1926.79 291.77 L1926.78 291.94 L1926.73 292.11 L1926.64 292.26 L1926.43 292.40 L1926.06 292.49 L1925.70 292.56 L1925.48 292.64 L1925.37 292.74 L1925.31 292.86 L1925.25 292.97 L1925.20 293.09 L1925.15 293.21 L1925.11 293.33 L1925.08 293.46 L1925.08 293.61 L1925.17 293.82 L1925.38 294.13 L1925.58 294.45 L1925.63 294.69 L1925.59 294.87 L1925.50 295.02 L1925.39 295.15 L1925.28 295.28 L1925.15 295.39 L1925.02 295.50 L1924.87 295.59 L1924.69 295.63 L1924.45 295.58 L1924.13 295.38 L1923.82 295.17 L1923.61 295.08 L1923.46 295.08 L1923.33 295.11 L1923.21 295.15 L1923.09 295.20 L1922.97 295.25 L1922.86 295.31 L1922.74 295.37 L1922.64 295.48 L1922.56 295.70 L1922.49 296.06 L1922.40 296.43 L1922.26 296.64 L1922.11 296.73 L1921.94 296.78 L1921.77 296.79 L1921.60 296.80 L1921.43 296.79 L1921.26 296.78 L1921.09 296.73 L1920.94 296.64 L1920.80 296.43 L1920.71 296.06 L1920.64 295.70 L1920.56 295.48 L1920.46 295.37 L1920.34 295.31 L1920.23 295.25 L1920.11 295.20 L1919.99 295.15 L1919.87 295.11 L1919.74 295.08 L1919.59 295.08 L1919.38 295.17 L1919.07 295.38 L1918.75 295.58 L1918.51 295.63 L1918.33 295.59 L1918.18 295.50 L1918.05 295.39 L1917.92 295.28 L1917.81 295.15 L1917.70 295.02 L1917.61 294.87 L1917.57 294.69 L1917.62 294.45 L1917.82 294.13 L1918.03 293.82 L1918.12 293.61 L1918.12 293.46 L1918.09 293.33 L1918.05 293.21 L1918.00 293.09 L1917.95 292.97 L1917.89 292.86 L1917.83 292.74 L1917.72 292.64 L1917.50 292.56 L1917.14 292.49 L1916.77 292.40 L1916.56 292.26 L1916.47 292.11 L1916.42 291.94 L1916.41 291.77 L1916.40 291.60 L1916.41 291.43 L1916.42 291.26 L1916.47 291.09 L1916.56 290.94 L1916.77 290.80 L1917.14 290.71 L1917.50 290.64 L1917.72 290.56 L1917.83 290.46 L1917.89 290.34 L1917.95 290.23 L1918.00 290.11 L1918.05 289.99 L1918.09 289.87 L1918.12 289.74 L1918.12 289.59 L1918.03 289.38 L1917.82 289.07 L1917.62 288.75 L1917.57 288.51 L1917.61 288.33 L1917.70 288.18 L1917.81 288.05 L1917.92 287.92 L1918.05 287.81 L1918.18 287.70 L1918.33 287.61 L1918.51 287.57 L1918.75 287.62 L1919.07 287.82 L1919.38 288.03 L1919.59 288.12 L1919.74 288.12 L1919.87 288.09 L1919.99 288.05 L1920.11 288.00 L1920.23 287.95 L1920.34 287.89 L1920.46 287.83 L1920.56 287.72 L1920.64 287.50 L1920.71 287.14 L1920.80 286.77 L1920.94 286.56 L1921.09 286.47 L1921.26 286.42 L1921.43 286.41 Z" fill="none" stroke="#000" stroke-width="1.1" stroke-linejoin="round"/>
<circle cx="1921.6" cy="291.6" r="1.6" fill="none" stroke="#000" stroke-width="1.1"/>
<rect x="20" y="21" width="1920" height="984.6" fill="#3c3c3c" fill-opacity="0.5"/>
</svg>
<div id="dlgshadow"></div>
<svg id="dlg" width="1960" height="1027" viewBox="0 0 1960 1027">
<rect x="503.10" y="187.00" width="959.80" height="655.00" fill="#ffffff" />
<rect x="503.10" y="187.00" width="959.80" height="54.00" fill="#f9f9f9" />
<rect x="503.10" y="240.70" width="959.80" height="1.2" fill="#cfcfcf"/>
<rect x="503.10" y="772.30" width="959.80" height="69.70" fill="#f9f9f9" />
<rect x="503.10" y="771.20" width="959.80" height="1.5" fill="#d9d9d9"/>
<text x="519.20" y="218.00" font-family="Liberation Sans" font-size="22.5" font-weight="normal" fill="#000" textLength="171.00" lengthAdjust="spacingAndGlyphs" stroke="#000" stroke-width="0.65">Custom Attributes</text>
<path d="M1417.5 210.6 L1428.3 221.4 M1428.3 210.6 L1417.5 221.4" fill="none" stroke="#7c7c7c" stroke-width="1.7" />
<text x="527.60" y="273.00" font-family="Liberation Sans" font-size="18" font-weight="normal" fill="#1d2432" textLength="210.80" lengthAdjust="spacingAndGlyphs" stroke="#1d2432" stroke-width="0.3">Change custom properties</text>
<rect x="1380.30" y="262.60" width="3.40" height="14.60" fill="#0565ff" />
<rect x="1374.70" y="268.20" width="14.60" height="3.40" fill="#0565ff" />
<text x="1398.00" y="276.30" font-family="Liberation Sans" font-size="18" font-weight="normal" fill="#0565ff" textLength="34.50" lengthAdjust="spacingAndGlyphs" stroke="#0565ff" stroke-width="0.5">ADD</text>
<rect x="523.60" y="294.80" width="920.00" height="459.60" fill="#fff" stroke="#cccccc" stroke-width="1.1" rx="3" />
<rect x="534.00" y="305.00" width="901.00" height="59.00" fill="#ff7f27" />
<rect x="539.20" y="310.20" width="890.80" height="48.60" fill="#eeeeee" />
<rect x="557.20" y="315.60" width="331.40" height="34.80" fill="#fff" stroke="#dcdcdc" stroke-width="1.1" rx="3.5" />
<rect x="559.20" y="316.20" width="327.40" height="1.2" fill="#ececec"/>
<text x="564.30" y="339.20" font-family="Liberation Sans" font-size="16.6" font-weight="normal" fill="#555" textLength="183.90" lengthAdjust="spacingAndGlyphs">disableLegendInteraction</text>
<rect x="944.60" y="315.60" width="330.80" height="34.80" fill="#fff" stroke="#dcdcdc" stroke-width="1.1" rx="3.5" />
<rect x="946.60" y="316.20" width="326.80" height="1.2" fill="#ececec"/>
<text x="951.20" y="339.20" font-family="Liberation Sans" font-size="16.6" font-weight="normal" fill="#555" textLength="28.40" lengthAdjust="spacingAndGlyphs">true</text>
<rect x="910.90" y="328.20" width="13.20" height="13.10" fill="#fff" stroke="#b9b9b9" stroke-width="1.7" />
<rect x="1298.90" y="328.20" width="13.20" height="13.10" fill="#fff" stroke="#b9b9b9" stroke-width="1.7" />
<circle cx="1402.5" cy="334.3" r="7.5" fill="#d9534f"/>
<path d="M1399.4 331.2 L1405.6 337.4 M1405.6 331.2 L1399.4 337.4" fill="none" stroke="#fff" stroke-width="2.3" stroke-linecap="round"/>
<rect x="1189.50" y="786.50" width="119.00" height="41.00" fill="#0565ff" stroke="#0558e0" stroke-width="1" rx="5" />
<text x="1237.50" y="811.50" font-family="Liberation Sans" font-size="18" font-weight="normal" fill="#fff" textLength="23.00" lengthAdjust="spacingAndGlyphs" stroke="#fff" stroke-width="0.6">OK</text>
<rect x="1325.10" y="787.10" width="117.90" height="40.00" fill="#fff" stroke="#adadad" stroke-width="1.8" rx="4.5" />
<text x="1357.00" y="811.50" font-family="Liberation Sans" font-size="18" font-weight="normal" fill="#111" textLength="53.75" lengthAdjust="spacingAndGlyphs" stroke="#111" stroke-width="0.55">Cancel</text>
<rect x="504.0" y="187.9" width="958.0000000000001" height="653.2" fill="none" stroke="#d3d3d3" stroke-width="1.8" rx="1.5"/>
</svg>
</body></html>
